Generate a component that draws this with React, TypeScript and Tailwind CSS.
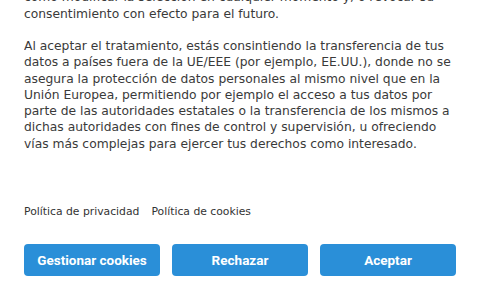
import React from "react";

const body = { fontFamily: "'DejaVu Sans', 'Liberation Sans', sans-serif" };
const btn = { fontFamily: "Roboto, 'Liberation Sans', sans-serif" };

const p1 = [
  "Puedes consultar más información sobre el tratamiento de tus datos, así",
  "como modificar la selección en cualquier momento y, o revocar su",
  "consentimiento con efecto para el futuro.",
];
const p2 = [
  "Al aceptar el tratamiento, estás consintiendo la transferencia de tus",
  "datos a países fuera de la UE/EEE (por ejemplo, EE.UU.), donde no se",
  "asegura la protección de datos personales al mismo nivel que en la",
  "Unión Europea, permitiendo por ejemplo el acceso a tus datos por",
  "parte de las autoridades estatales o la transferencia de los mismos a",
  "dichas autoridades con fines de control y supervisión, u ofreciendo",
  "vías más complejas para ejercer tus derechos como interesado.",
];

export default function App() {
  return (
    <div className="w-[480px] h-[300px] bg-white overflow-hidden flex flex-col px-6 text-[#3a3a3a]" style={body}>
      <div className="h-[176px] overflow-hidden flex flex-col justify-end pb-6 text-[12.3px] leading-[16.3px]">
        <p>
          {p1.map((l) => (
            <span key={l} className="block whitespace-nowrap">{l}</span>
          ))}
        </p>
        <p className="mt-4">
          {p2.map((l) => (
            <span key={l} className="block whitespace-nowrap">{l}</span>
          ))}
        </p>
      </div>
      <div className="mt-7 flex gap-3 text-[10.8px] leading-4 text-[#333]">
        <a href="#">Política de privacidad</a>
        <a href="#">Política de cookies</a>
      </div>
      <div className="mt-6 grid grid-cols-3 gap-3" style={btn}>
        <button className="h-8 rounded bg-[#2a8fd8] text-white text-[13.5px] font-bold">Gestionar cookies</button>
        <button className="h-8 rounded bg-[#2a8fd8] text-white text-[13.5px] font-bold">Rechazar</button>
        <button className="h-8 rounded bg-[#2a8fd8] text-white text-[13.5px] font-bold">Aceptar</button>
      </div>
    </div>
  );
}
